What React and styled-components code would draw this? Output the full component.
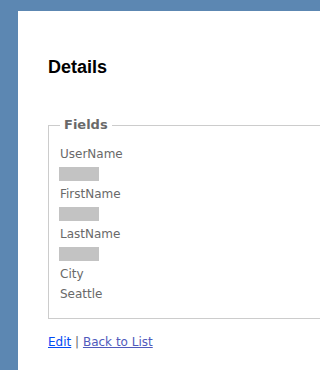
import React from "react";
import styled, { createGlobalStyle } from "styled-components";

const GlobalStyle = createGlobalStyle`
  html, body {
    margin: 0;
    padding: 0;
    overflow: hidden;
  }
  body {
    background-color: #5c87b2;
    font-family: Verdana, "DejaVu Sans", sans-serif;
    font-size: 12px;
    color: #696969;
  }
`;

const Page = styled.div`
  margin: 11px 0 0 18px;
  background: #fff;
  min-height: 359px;
  padding: 45px 0 0 30px;
  box-sizing: border-box;
  overflow: hidden;
`;

const Title = styled.h2`
  margin: 0;
  font: bold 18px/22px "Liberation Sans", Arial, sans-serif;
  color: #000;
`;

const FieldSet = styled.fieldset`
  margin: 39px 0 0 0;
  border: 1px solid #ccc;
  border-right: none;
  padding: 11px 0 14px 11px;
  min-width: 0;
`;

const Legend = styled.legend`
  padding: 0 4px;
  font-size: 13px;
  line-height: 16px;
  font-weight: 600;
  color: #696969;
`;

const Row = styled.div`
  height: 20px;
  line-height: 20px;
  display: flex;
  align-items: center;
`;

const EmptyValue = styled.span`
  display: block;
  width: 40px;
  height: 14px;
  margin-left: -1px;
  background: #c3c3c3;
`;

const Actions = styled.p`
  margin: 13px 0 0 0;
  line-height: 20px;
`;

const ActionLink = styled.a`
  color: ${(p) => (p.$visited ? "#505abc" : "#034af3")};
  text-decoration: underline;
`;

const fields = [
  { label: "UserName", value: "" },
  { label: "FirstName", value: "" },
  { label: "LastName", value: "" },
  { label: "City", value: "Seattle" },
];

export default function App() {
  return (
    <>
      <GlobalStyle />
      <Page>
        <Title>Details</Title>
        <FieldSet>
          <Legend>Fields</Legend>
          {fields.map((f) => (
            <React.Fragment key={f.label}>
              <Row>{f.label}</Row>
              <Row>{f.value ? f.value : <EmptyValue />}</Row>
            </React.Fragment>
          ))}
        </FieldSet>
        <Actions>
          <ActionLink href="#">Edit</ActionLink> |{" "}
          <ActionLink href="#" $visited>
            Back to List
          </ActionLink>
        </Actions>
      </Page>
    </>
  );
}
